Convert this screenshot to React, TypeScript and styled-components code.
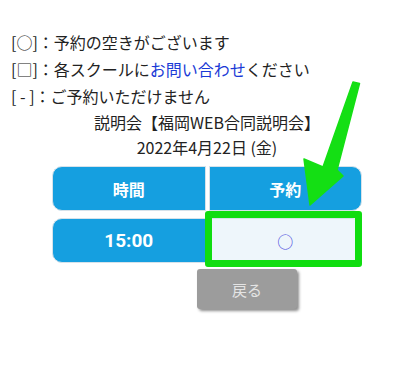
import styled, { createGlobalStyle } from 'styled-components'

const GlobalStyle = createGlobalStyle`
  html, body {
    margin: 0;
    padding: 0;
    background: #ffffff;
  }
  body {
    font-family: "Noto Sans CJK JP", "Noto Sans", sans-serif;
    color: #222222;
  }
`

type Slot = {
  time: string
  mark: string
}

const slots: Slot[] = [{ time: '15:00', mark: '○' }]

export default function App() {
  return (
    <Page>
      <GlobalStyle />
      <Legend>
        <LegendLine>[○]：予約の空きがございます</LegendLine>
        <LegendLine>
          [□]：各スクールに<Link href="#">お問い合わせ</Link>ください
        </LegendLine>
        <LegendLine>[ - ]：ご予約いただけません</LegendLine>
      </Legend>

      <Heading>
        <HeadingLine>説明会【福岡WEB合同説明会】</HeadingLine>
        <HeadingLine>2022年4月22日 (金)</HeadingLine>
      </Heading>

      <Table>
        <HeadCell $side="left">時間</HeadCell>
        <HeadCell $side="right">予約</HeadCell>
        {slots.map((slot) => (
          <Row key={slot.time}>
            <TimeCell>{slot.time}</TimeCell>
            <MarkCell>
              <Mark>{slot.mark}</Mark>
              <Highlight />
            </MarkCell>
          </Row>
        ))}
      </Table>

      <Footer>
        <BackButton>戻る</BackButton>
      </Footer>

      <Arrow viewBox="0 0 414 380" width="414" height="380">
        <polygon
          points="353,82 359.5,83.5 337,170 343,176 310,205 304,159 323,167"
          fill="#14df14"
          stroke="#14df14"
          strokeWidth="1.5"
          strokeLinejoin="round"
        />
      </Arrow>
    </Page>
  )
}

const Page = styled.div`
  position: relative;
  width: 414px;
  height: 380px;
  padding-top: 29px;
  box-sizing: border-box;
  overflow: hidden;
`

const Legend = styled.div`
  padding-left: 11px;
`

const LegendLine = styled.div`
  font-size: 16px;
  line-height: 27px;
  white-space: nowrap;
`

const Link = styled.a`
  color: #1a3ad6;
  text-decoration: none;
`

const Heading = styled.div`
  text-align: center;
`

const HeadingLine = styled.div`
  font-size: 16px;
  line-height: 25px;
`

const Table = styled.div`
  display: grid;
  grid-template-columns: 1fr 1fr;
  column-gap: 3px;
  row-gap: 7px;
  width: 310px;
  margin: 6px auto 0;
`

const Row = styled.div`
  display: contents;
`

const cellBase = `
  height: 45px;
  box-sizing: border-box;
  display: flex;
  align-items: center;
  justify-content: center;
  border: 1px solid #d6e2ea;
`

const HeadCell = styled.div<{ $side: 'left' | 'right' }>`
  ${cellBase}
  background: #159fe0;
  color: #ffffff;
  font-weight: 700;
  font-size: 16px;
  border-radius: ${(p) => (p.$side === 'left' ? '10px 0 0 10px' : '0 10px 10px 0')};
`

const TimeCell = styled.div`
  ${cellBase}
  background: #159fe0;
  color: #ffffff;
  font-family: Roboto, "Noto Sans", sans-serif;
  font-weight: 700;
  font-size: 19px;
  border-radius: 10px 0 0 10px;
`

const MarkCell = styled.div`
  ${cellBase}
  position: relative;
  background: #eef6fb;
  border-radius: 0 10px 10px 0;
`

const Mark = styled.span`
  color: #4a4ae0;
  font-size: 16px;
  line-height: 1;
`

const Highlight = styled.div`
  position: absolute;
  left: -5px;
  top: -8px;
  right: -1px;
  bottom: -5px;
  border: 7px solid #10dd10;
  border-radius: 3px;
  pointer-events: none;
`

const Footer = styled.div`
  display: flex;
  justify-content: center;
  padding-left: 80px;
  margin-top: 6px;
`

const BackButton = styled.button`
  width: 100px;
  height: 40px;
  border: none;
  border-radius: 3px;
  background: #9c9c9c;
  color: #e4e4e4;
  font-family: "Noto Sans CJK JP", sans-serif;
  font-size: 15px;
  box-shadow: 2px 2px 3px rgba(0, 0, 0, 0.45);
  cursor: pointer;
`

const Arrow = styled.svg`
  position: absolute;
  left: 0;
  top: 0;
  pointer-events: none;
`
